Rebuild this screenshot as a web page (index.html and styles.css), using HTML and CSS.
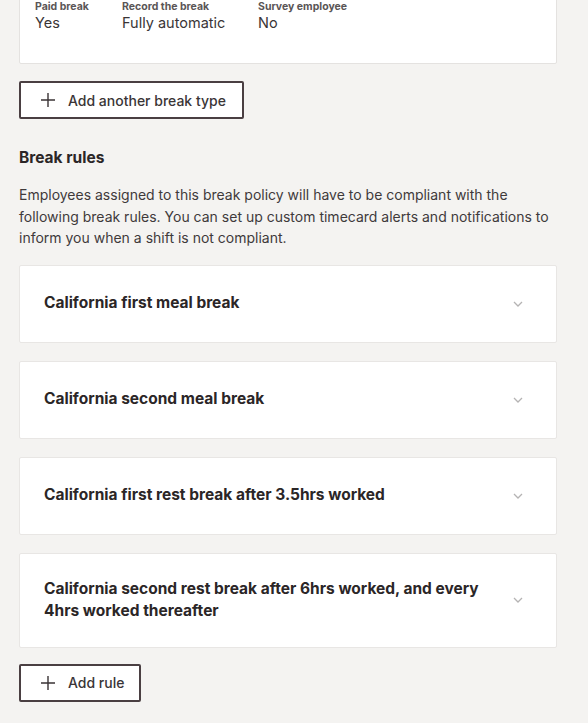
FILE: index.html
```html
<!DOCTYPE html>
<html>
<head>
<meta charset="utf-8">
<link rel="stylesheet" href="styles.css">
</head>
<body>
<div class="page">
  <div class="type-card">
    <div class="field">
      <div class="label">Paid break</div>
      <div class="value">Yes</div>
    </div>
    <div class="field">
      <div class="label">Record the break</div>
      <div class="value">Fully automatic</div>
    </div>
    <div class="field">
      <div class="label">Survey employee</div>
      <div class="value">No</div>
    </div>
  </div>

  <button class="btn btn-type"><svg class="plus" viewBox="0 0 16 16" width="16" height="16"><path d="M8 1v14M1 8h14" stroke="#3a3335" stroke-width="1.4" fill="none"/></svg><span>Add another break type</span></button>

  <h2 class="heading">Break rules</h2>
  <p class="desc">Employees assigned to this break policy will have to be compliant with the following break rules. You can set up custom timecard alerts and notifications to inform you when a shift is not compliant.</p>

  <div class="rules">
    <div class="rule">
      <div class="rule-title">California first meal break</div>
      <svg class="chev" viewBox="0 0 10 6" width="10" height="6"><path d="M1 1l4 4 4-4" stroke="#b5b3b3" stroke-width="1.3" fill="none"/></svg>
    </div>
    <div class="rule">
      <div class="rule-title">California second meal break</div>
      <svg class="chev" viewBox="0 0 10 6" width="10" height="6"><path d="M1 1l4 4 4-4" stroke="#b5b3b3" stroke-width="1.3" fill="none"/></svg>
    </div>
    <div class="rule">
      <div class="rule-title">California first rest break after 3.5hrs worked</div>
      <svg class="chev" viewBox="0 0 10 6" width="10" height="6"><path d="M1 1l4 4 4-4" stroke="#b5b3b3" stroke-width="1.3" fill="none"/></svg>
    </div>
    <div class="rule">
      <div class="rule-title">California second rest break after 6hrs worked, and every 4hrs worked thereafter</div>
      <svg class="chev" viewBox="0 0 10 6" width="10" height="6"><path d="M1 1l4 4 4-4" stroke="#b5b3b3" stroke-width="1.3" fill="none"/></svg>
    </div>
  </div>

  <button class="btn btn-rule"><svg class="plus" viewBox="0 0 16 16" width="16" height="16"><path d="M8 1v14M1 8h14" stroke="#3a3335" stroke-width="1.4" fill="none"/></svg><span>Add rule</span></button>
</div>
</body>
</html>
```

FILE: styles.css
```css
html, body {
  margin: 0;
  padding: 0;
  background: #f4f3f1;
}
body {
  font-family: Inter, "Liberation Sans", Arial, sans-serif;
  color: #2b2627;
}
.page {
  padding: 0 31px 0 19px;
  display: flex;
  flex-direction: column;
  align-items: flex-start;
}
.type-card {
  align-self: stretch;
  margin-top: -20px;
  background: #fff;
  border: 1px solid #e4e2e0;
  border-radius: 2px;
  padding: 20px 15px 30px;
  display: flex;
  height: 32px;
}
.field {
  display: flex;
  flex-direction: column;
}
.field:nth-child(1) { width: 87px; }
.field:nth-child(2) { width: 136px; }
.label {
  font-size: 10.5px;
  font-weight: 700;
  color: #5a5556;
  line-height: 12px;
}
.value {
  font-size: 14.5px;
  color: #3a3536;
  line-height: 18px;
  margin-top: 1px;
}
.btn {
  display: flex;
  align-items: center;
  gap: 12px;
  height: 38px;
  margin-top: 17px;
  background: #fff;
  border: 2px solid #4a3f42;
  border-radius: 2px;
  padding: 0 10px 0 19px;
  font-family: inherit;
  font-size: 14px;
  font-weight: 500;
  color: #3a3536;
  box-sizing: border-box;
  white-space: nowrap;
}
.btn-type { width: 225px; }
.btn-rule { width: 122px; margin-top: 16px; }
.plus { flex: none; }
.heading {
  margin: 30px 0 0;
  font-size: 15.5px;
  font-weight: 700;
  line-height: 18px;
  color: #2b2627;
}
.desc {
  margin: 17px 0 0;
  font-size: 14px;
  line-height: 21.5px;
  color: #3f3a3b;
}
.rules {
  align-self: stretch;
  margin-top: 16px;
  display: flex;
  flex-direction: column;
  gap: 18px;
}
.rule {
  background: #fff;
  border: 1px solid #e8e6e4;
  border-radius: 2px;
  padding: 24px 33px 24px 24px;
  min-height: 28px;
  display: flex;
  align-items: center;
  justify-content: space-between;
  gap: 20px;
}
.rule-title {
  font-size: 15.5px;
  font-weight: 700;
  line-height: 22.5px;
  color: #2b2627;
  max-width: 445px;
}
.chev { flex: none; }
```
